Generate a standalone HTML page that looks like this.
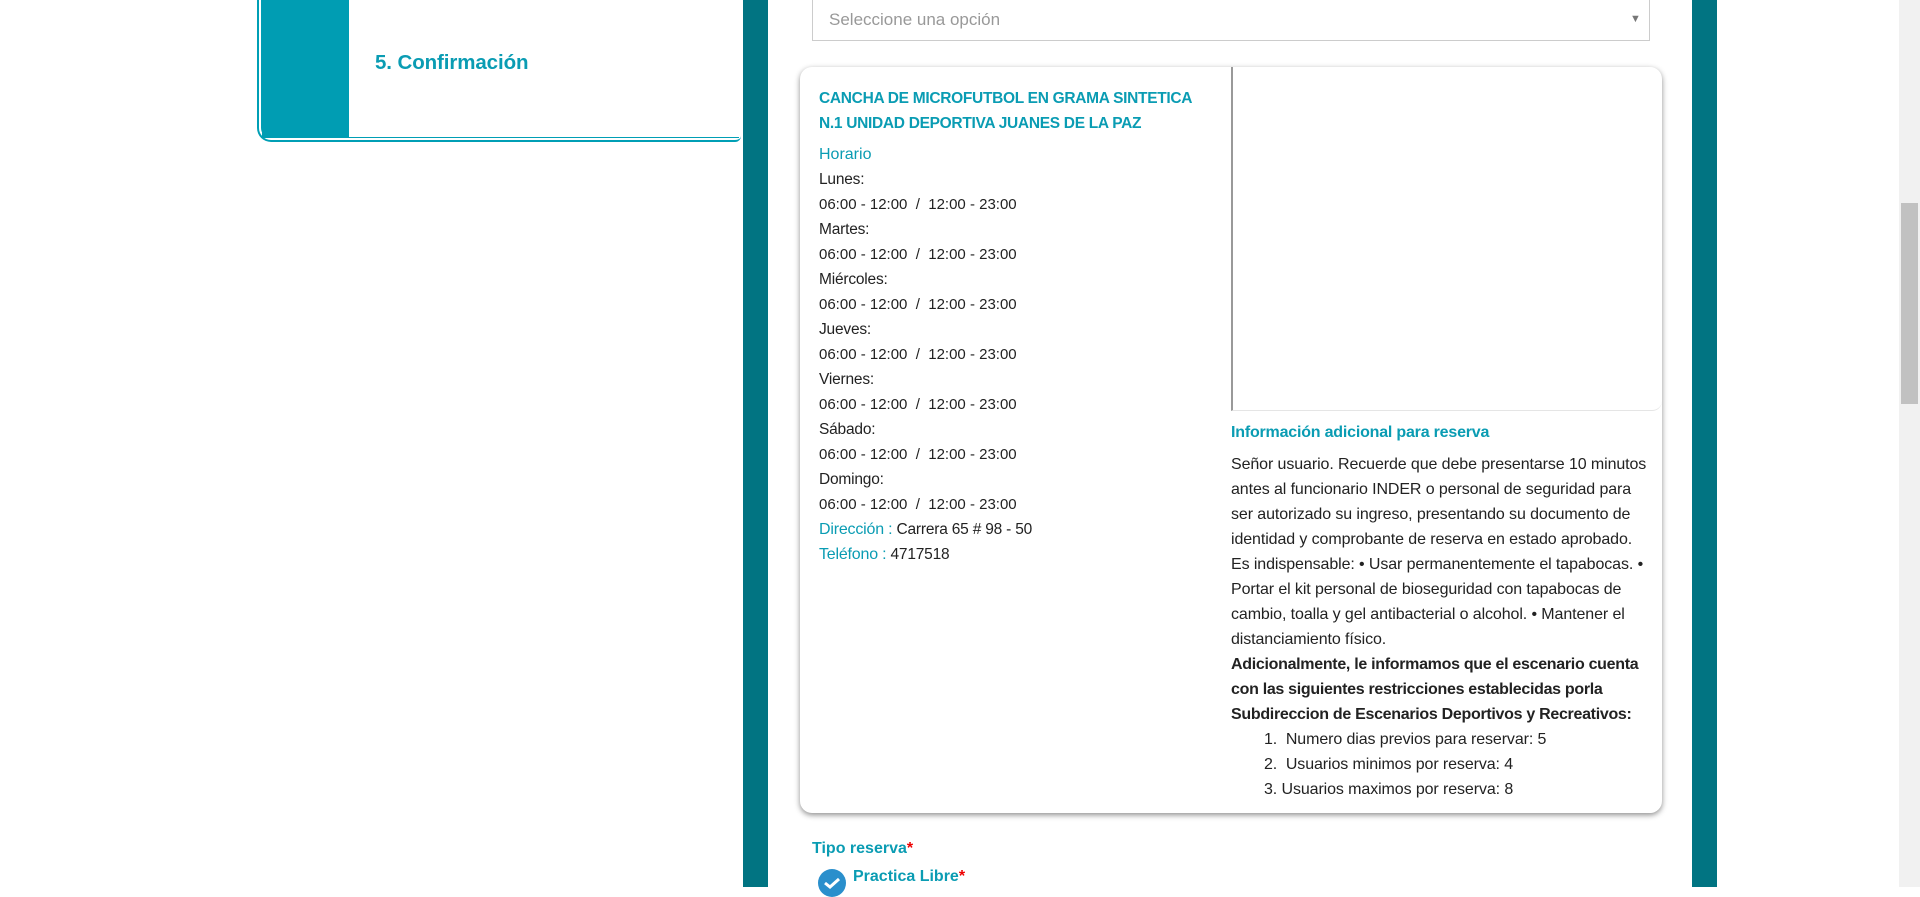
<!DOCTYPE html>
<html><head><meta charset="utf-8"><style>
*{margin:0;padding:0;box-sizing:border-box}
body{width:1920px;height:887px;overflow:hidden;background:#fff;font-family:"Liberation Sans",sans-serif;position:relative}
.a{position:absolute;white-space:nowrap}
.teal{color:#0a9cb3}
.s{font-size:15.5px;color:#222;letter-spacing:-0.2px}
.t{font-size:15px;color:#222;letter-spacing:0}
</style></head><body>
<!-- left panel -->
<div class="a" style="left:257px;top:-20px;width:484px;height:162px;border:2px solid #009fb5;border-top:none;border-right:none;border-radius:0 0 6px 14px"></div>
<div class="a" style="left:261px;top:-20px;width:478px;height:158px;border:1px solid #009fb5;border-top:none;border-right:none;border-radius:0 0 0 10px"></div>
<div class="a" style="left:262px;top:0;width:87px;height:138px;background:#009db3"></div>
<div class="a" style="left:375px;top:51px;font-size:20.5px;font-weight:bold;color:#0a9cb3;letter-spacing:-0.1px">5. Confirmación</div>
<!-- dark columns -->
<div class="a" style="left:743px;top:0;width:25px;height:887px;background:#017482"></div>
<div class="a" style="left:1692px;top:0;width:25px;height:887px;background:#017482"></div>
<!-- scrollbar -->
<div class="a" style="left:1899px;top:0;width:21px;height:887px;background:#f1f1f1"></div>
<div class="a" style="left:1901px;top:203px;width:17px;height:201px;background:#c1c1c1"></div>
<!-- select -->
<div class="a" style="left:812px;top:-5px;width:838px;height:46px;border:1px solid #ccc;background:#fff"></div>
<div class="a" style="left:829px;top:10px;font-size:17px;color:#999">Seleccione una opción</div>
<div class="a" style="left:1630px;top:13px;font-size:11px;color:#777">▼</div>
<!-- card -->
<div class="a" style="left:800px;top:67px;width:862px;height:746px;border-radius:12px;background:#fff;box-shadow:0 2px 6px rgba(0,0,0,.45)"></div>
<div class="a" style="left:1231px;top:67px;width:431px;height:344px;border-left:2px solid #999;border-bottom:1px solid #e5e5e5;border-radius:0 12px 10px 0"></div>
<div class="a teal" style="left:819px;top:86px;font-size:15.5px;font-weight:bold;line-height:25px;letter-spacing:-0.3px">CANCHA DE MICROFUTBOL EN GRAMA SINTETICA<br>N.1 UNIDAD DEPORTIVA JUANES DE LA PAZ</div>
<div class="a" style="left:819px;top:142px;line-height:25px">
<div class="teal" style="font-size:16px">Horario</div>
<div class="s">Lunes:</div><div class="t">06:00 - 12:00 &nbsp;/ &nbsp;12:00 - 23:00</div>
<div class="s">Martes:</div><div class="t">06:00 - 12:00 &nbsp;/ &nbsp;12:00 - 23:00</div>
<div class="s">Miércoles:</div><div class="t">06:00 - 12:00 &nbsp;/ &nbsp;12:00 - 23:00</div>
<div class="s">Jueves:</div><div class="t">06:00 - 12:00 &nbsp;/ &nbsp;12:00 - 23:00</div>
<div class="s">Viernes:</div><div class="t">06:00 - 12:00 &nbsp;/ &nbsp;12:00 - 23:00</div>
<div class="s">Sábado:</div><div class="t">06:00 - 12:00 &nbsp;/ &nbsp;12:00 - 23:00</div>
<div class="s">Domingo:</div><div class="t">06:00 - 12:00 &nbsp;/ &nbsp;12:00 - 23:00</div>
<div class="s"><span class="teal" style="font-size:16px">Dirección :</span> Carrera 65 # 98 - 50</div>
<div class="s"><span class="teal" style="font-size:16px">Teléfono :</span> 4717518</div>
</div>
<div class="a teal" style="left:1231px;top:424px;font-size:16px;font-weight:bold;letter-spacing:-0.2px">Información adicional para reserva</div>
<div class="a" style="left:1231px;top:452px;line-height:25px;font-size:16px;color:#222;letter-spacing:-0.1px">
Señor usuario. Recuerde que debe presentarse 10 minutos<br>antes al funcionario INDER o personal de seguridad para<br>ser autorizado su ingreso, presentando su documento de<br>identidad y comprobante de reserva en estado aprobado.<br>Es indispensable: • Usar permanentemente el tapabocas. •<br>Portar el kit personal de bioseguridad con tapabocas de<br>cambio, toalla y gel antibacterial o alcohol. • Mantener el<br>distanciamiento físico.<br>
<b style="letter-spacing:-0.3px">Adicionalmente, le informamos que el escenario cuenta<br>con las siguientes restricciones establecidas porla<br>Subdireccion de Escenarios Deportivos y Recreativos:</b><br>
<span style="padding-left:33px">1.&nbsp; Numero dias previos para reservar: 5</span><br>
<span style="padding-left:33px">2.&nbsp; Usuarios minimos por reserva: 4</span><br>
<span style="padding-left:33px">3. Usuarios maximos por reserva: 8</span>
</div>
<!-- tipo reserva -->
<div class="a teal" style="left:812px;top:840px;font-size:16px;font-weight:bold">Tipo reserva<span style="color:#e00">*</span></div>
<div class="a" style="left:818px;top:869px;width:28px;height:28px;border-radius:50%;background:#2a8fcc"></div>
<svg class="a" style="left:823px;top:876px" width="18" height="14"><path d="M2 7 L7 11 L16 3" stroke="#fff" stroke-width="3" fill="none"/></svg>
<div class="a teal" style="left:853px;top:868px;font-size:16px;font-weight:bold">Practica Libre<span style="color:#e00">*</span></div>
</body></html>
